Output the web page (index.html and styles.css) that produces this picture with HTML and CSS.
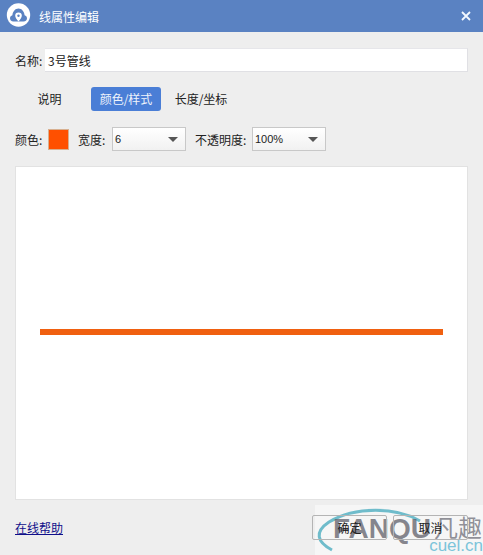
FILE: index.html
```html
<!DOCTYPE html>
<html lang="zh-CN">
<head>
    <meta charset="UTF-8">
    <title>线属性编辑</title>
    <link rel="stylesheet" href="styles.css">
</head>
<body>
    <div class="dialog">
        <div class="titlebar">
            <svg class="logo" width="26" height="26" viewBox="0 0 26 26">
                <circle cx="12.500" cy="12" r="11.700" fill="#fff"/>
                <path d="M7.500 18.500c-2.300 0-3.500-1.500-3.500-3.200 0-1.500 1-2.700 2.400-3C6.800 8.300 9.300 5.500 12.500 5.500s5.700 2.800 6.100 6.800c1.400.3 2.400 1.500 2.400 3 0 1.700-1.200 3.200-3.500 3.200z" fill="#5a82c2"/>
                <path d="M12.500 18.500c-1.800-2.400-3.300-4-3.300-5.800a3.300 3.300 0 0 1 6.600 0c0 1.800-1.500 3.400-3.300 5.800z" fill="#fff"/>
                <circle cx="12.500" cy="12.700" r="1.200" fill="#5a82c2"/>
            </svg>
            <span class="title">线属性编辑</span>
            <svg class="close" width="10" height="10" viewBox="0 0 10 10">
                <path d="M1 1l8 8M9 1l-8 8" stroke="#f2f8ff" stroke-width="1.800" fill="none"/>
            </svg>
        </div>

        <div class="content">
            <div class="name-row">
                <label class="name-label">名称:</label>
                <div class="name-input">3号管线</div>
            </div>

            <div class="tabs">
                <div class="tab tab-first">说明</div>
                <div class="tab tab-active">颜色/样式</div>
                <div class="tab tab-last">长度/坐标</div>
            </div>

            <div class="style-row">
                <span class="color-label">颜色:</span>
                <div class="swatch"></div>
                <span class="width-label">宽度:</span>
                <div class="select"><span class="select-value">6</span><i class="arrow"></i></div>
                <span class="opacity-label">不透明度:</span>
                <div class="select"><span class="select-value">100%</span><i class="arrow"></i></div>
            </div>

            <div class="preview">
                <div class="line"></div>
            </div>

            <div class="footer">
                <a class="help" href="#">在线帮助</a>
                <div class="buttons">
                    <div class="btn">确定</div>
                    <div class="btn">取消</div>
                </div>
            </div>
        </div>

        <div class="watermark">
            <svg class="arc" width="168" height="50" viewBox="0 0 168 50">
                <path d="M17 45C2 37-1 27 14 17 40 1 82 2 105 16" stroke="#6fbccb" stroke-width="3" fill="none"/>
            </svg>
            <span class="wm-latin">FANQU</span>
            <span class="wm-cn">凡趣</span>
            <span class="wm-url">cuel.cn</span>
        </div>
    </div>
</body>
</html>
```

FILE: styles.css
```css
* {
    margin: 0;
    padding: 0;
    box-sizing: border-box;
}

body {
    font-family: "Noto Sans CJK SC", "Liberation Sans", sans-serif;
    font-size: 12px;
    color: #222;
    background: #eeeeee;
}

.dialog {
    position: relative;
    width: 483px;
    height: 555px;
    overflow: hidden;
    background: #eeeeee;
}

.titlebar {
    display: flex;
    align-items: center;
    height: 32px;
    padding: 0 12px 0 6px;
    background: #5a82c2;
    color: #fff;
}

.title {
    margin-left: 7px;
    flex: 1;
}

.content {
    padding: 16px 15px 0 15px;
}

.name-row {
    display: flex;
    align-items: center;
    height: 24px;
}

.name-label {
    width: 30px;
}

.name-input {
    flex: 1;
    height: 24px;
    line-height: 23px;
    padding-left: 3px;
    background: #fff;
    border: 1px solid #e0e0e4;
    border-top-color: #e6e6ea;
    border-left: none;
}

.tabs {
    display: flex;
    margin-top: 15px;
    padding-left: 11px;
    gap: 6px;
}

.tab {
    width: 70px;
    height: 24px;
    line-height: 24px;
    text-align: center;
}

.tab-first {
    width: 59px;
    padding-right: 12px;
}

.tab-active {
    background: #4a7ed6;
    color: #eef3fb;
    border-radius: 3px;
}

.tab-last {
    margin-left: -1px;
}

.style-row {
    display: flex;
    align-items: center;
    height: 24px;
    margin-top: 16px;
}

.color-label {
    width: 33px;
}

.swatch {
    width: 21px;
    height: 21px;
    background: #ff5000;
    border: 1px solid #d8b090;
}

.width-label {
    margin-left: 9px;
    width: 34px;
}

.opacity-label {
    margin-left: 9px;
    width: 57px;
}

.select {
    display: flex;
    align-items: center;
    justify-content: space-between;
    width: 74px;
    height: 24px;
    padding: 0 7px 0 2px;
    background: linear-gradient(#ffffff, #f1f1f1);
    border: 1px solid #c8c8c8;
}

.select-value {
    font-family: "Liberation Sans", sans-serif;
    font-size: 11px;
}

.arrow {
    width: 0;
    height: 0;
    border-left: 5px solid transparent;
    border-right: 5px solid transparent;
    border-top: 5px solid #555;
}

.preview {
    display: flex;
    align-items: center;
    height: 334px;
    margin-top: 15px;
    padding: 0 24px 3px;
    background: #fff;
    border: 1px solid #e2e2e2;
}

.line {
    flex: 1;
    height: 6px;
    background: #f06010;
}

.footer {
    display: flex;
    align-items: center;
    justify-content: space-between;
    margin-top: 15px;
}

.help {
    color: #10108a;
}

.buttons {
    display: flex;
    gap: 6px;
}

/* button text stays dark over the watermark */
.btn {
    position: relative;
    z-index: 1;
    width: 75px;
    height: 25px;
    line-height: 23px;
    text-align: center;
    border: 1px solid #b4b4b4;
    border-radius: 2px;
}

/* site watermark stamped over the lower right corner */
.watermark {
    position: absolute;
    left: 315px;
    top: 505px;
    width: 168px;
    height: 50px;
    background: rgba(255, 255, 255, 0.45);
}

.arc {
    position: absolute;
    left: 0;
    top: 0;
    overflow: visible;
}

.wm-latin {
    position: absolute;
    left: 18px;
    top: 8px;
    font-family: "Liberation Sans", sans-serif;
    font-size: 28px;
    line-height: 32px;
    font-weight: bold;
    color: rgba(90, 90, 100, 0.72);
}

.wm-cn {
    position: absolute;
    right: 1px;
    top: 7px;
    font-size: 24px;
    line-height: 30px;
    color: rgba(110, 110, 120, 0.75);
}

.wm-url {
    position: absolute;
    right: 0;
    bottom: 0;
    font-family: "Liberation Sans", sans-serif;
    font-size: 17px;
    line-height: 18px;
    color: #7cc4da;
}
```
